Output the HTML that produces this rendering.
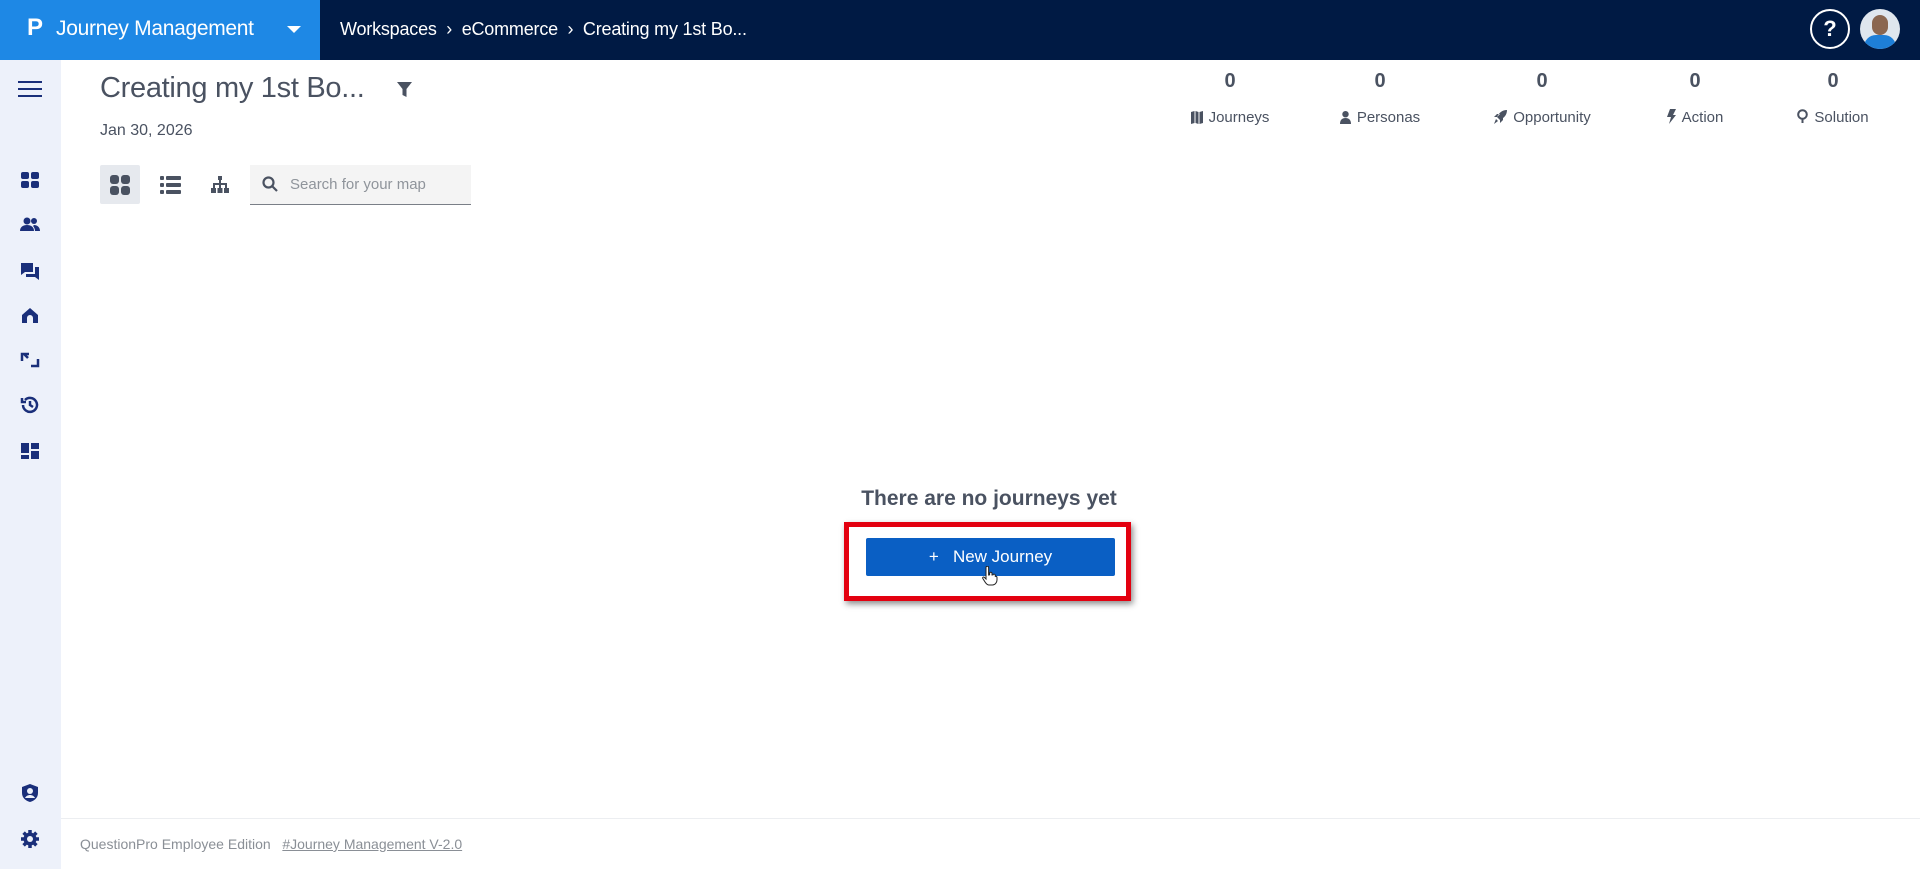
<!DOCTYPE html>
<html><head><meta charset="utf-8"><style>
*{margin:0;padding:0;box-sizing:border-box}
body{width:1920px;height:869px;overflow:hidden;background:#fff;font-family:"Liberation Sans",sans-serif;color:#4a5261;position:relative}
.hdr{position:absolute;left:0;top:0;width:1920px;height:60px;background:#001a44}
.brand{position:absolute;left:0;top:0;width:320px;height:60px;background:#1e88e5;color:#fff}
.abs{position:absolute}
.side{position:absolute;left:0;top:60px;width:61px;height:809px;background:#edf1fa}
.ic{position:absolute;left:20px;width:20px;height:20px}
.stat{position:absolute;text-align:center;width:150px}
.stat .n{font-size:20px;font-weight:bold;color:#4a5261;position:absolute;top:70px;width:150px}
.stat .l{font-size:15px;position:absolute;top:109px;width:150px;white-space:nowrap}
.stat svg{vertical-align:-2px;margin-right:6px}
</style></head><body>
<div class="hdr"></div>
<div class="brand">
 <div class="abs" style="left:27px;top:14px;font-size:24px;font-weight:bold">P</div>
 <div class="abs" style="left:56px;top:17px;font-size:21px;letter-spacing:-0.3px">Journey Management</div>
 <div class="abs" style="left:287px;top:26px;width:0;height:0;border-left:7px solid transparent;border-right:7px solid transparent;border-top:7px solid #fff"></div>
</div>
<div class="abs" style="left:340px;top:19px;color:#fff;font-size:18px;white-space:nowrap;letter-spacing:-0.2px">Workspaces &nbsp;›&nbsp; eCommerce &nbsp;›&nbsp; Creating my 1st Bo...</div>
<div class="abs" style="left:1810px;top:9px;width:40px;height:40px;border:2px solid #fff;border-radius:50%;color:#fff;font-size:22px;font-weight:bold;text-align:center;line-height:36px">?</div>
<div class="abs" style="left:1860px;top:9px;width:40px;height:40px;border-radius:50%;background:#dfe6ee;overflow:hidden">
 <div class="abs" style="left:12px;top:6px;width:16px;height:20px;border-radius:8px;background:#8a6650"></div>
 <div class="abs" style="left:4px;top:26px;width:32px;height:20px;border-radius:12px 12px 0 0;background:#1e7fd8"></div>
</div>

<div class="side">
 <svg class="abs" style="left:18px;top:20px" width="24" height="18"><rect y="1" width="24" height="2" fill="#1a2f7a"/><rect y="8" width="24" height="2" fill="#1a2f7a"/><rect y="15" width="24" height="2" fill="#1a2f7a"/></svg>
 <svg class="ic" style="top:110px" viewBox="0 0 20 20" fill="#1a2f7a"><rect x="1" y="2" width="8" height="7" rx="2"/><rect x="11" y="2" width="8" height="7" rx="2"/><rect x="1" y="11" width="8" height="7" rx="2"/><rect x="11" y="11" width="8" height="7" rx="2"/></svg>
 <svg class="ic" style="top:155px" viewBox="0 0 20 20" fill="#1a2f7a"><circle cx="7" cy="6" r="3.5"/><circle cx="14" cy="6" r="3"/><path d="M0 16c0-4 3-6 7-6s7 2 7 6z"/><path d="M14 10c3 0 6 2 6 6h-5c0-2-1-4-2-5z"/></svg>
 <svg class="ic" style="top:201px" viewBox="0 0 20 20" fill="#1a2f7a"><path d="M1 2h12v9H5l-4 3z"/><path d="M15 6h4v13l-4-3H6v-3h9z"/></svg>
 <svg class="ic" style="top:245px" viewBox="0 0 20 20" fill="#1a2f7a"><path d="M10 3l8 7v8h-5v-5a3 3 0 0 0-6 0v5H2v-8z"/></svg>
 <svg class="ic" style="top:290px" viewBox="0 0 20 20" fill="none" stroke="#1a2f7a" stroke-width="2.5"><path d="M2 11V4h7M18 9v7h-7M4 4l4 4"/></svg>
 <svg class="ic" style="top:335px" viewBox="0 0 20 20" fill="none" stroke="#1a2f7a" stroke-width="2.5"><path d="M3 10a7 7 0 1 0 2-5"/><path d="M10 6v4l3 2"/><path d="M2 3v4h4" /></svg>
 <svg class="ic" style="top:381px" viewBox="0 0 20 20" fill="#1a2f7a"><rect x="1" y="2" width="8" height="10"/><rect x="11" y="2" width="8" height="6"/><rect x="1" y="14" width="8" height="4"/><rect x="11" y="10" width="8" height="8"/></svg>
 <svg class="ic" style="top:723px" viewBox="0 0 20 20" fill="#1a2f7a"><path d="M10 1l8 3v6c0 5-4 8-8 9-4-1-8-4-8-9V4z"/><circle cx="10" cy="8" r="3" fill="#edf1fa"/><path d="M5 15c1-2 3-3 5-3s4 1 5 3" fill="#edf1fa"/></svg>
 <svg class="ic" style="top:769px" viewBox="0 0 20 20" fill="#1a2f7a"><circle cx="10" cy="10" r="6.5"/><g stroke="#1a2f7a" stroke-width="3.5"><path d="M10 1v18M1 10h18M3.6 3.6l12.8 12.8M16.4 3.6L3.6 16.4"/></g><circle cx="10" cy="10" r="3" fill="#edf1fa"/></svg>
</div>

<div class="abs" style="left:100px;top:72px;font-size:29px;color:#4a5261;letter-spacing:-0.3px">Creating my 1st Bo...</div>
<svg class="abs" style="left:397px;top:82px" width="15" height="15" viewBox="0 0 15 15"><path d="M0 0h15l-5.5 7v8l-4-2V7z" fill="#4a5261"/></svg>
<div class="abs" style="left:100px;top:122px;font-size:16px">Jan 30, 2026</div>

<div class="abs" style="left:100px;top:165px;width:40px;height:39px;background:#e6e9ee;border-radius:2px"></div>
<svg class="abs" style="left:109px;top:174px" width="22" height="22" viewBox="0 0 22 22" fill="#4a5261"><rect x="1" y="1" width="9" height="9" rx="3"/><rect x="12" y="1" width="9" height="9" rx="3"/><rect x="1" y="12" width="9" height="9" rx="3"/><rect x="12" y="12" width="9" height="9" rx="3"/></svg>
<svg class="abs" style="left:160px;top:176px" width="21" height="18" viewBox="0 0 21 18" fill="#4a5261"><rect x="0" y="0" width="4" height="4" rx="1"/><rect x="6" y="0" width="15" height="4" rx="1"/><rect x="0" y="7" width="4" height="4" rx="1"/><rect x="6" y="7" width="15" height="4" rx="1"/><rect x="0" y="14" width="4" height="4" rx="1"/><rect x="6" y="14" width="15" height="4" rx="1"/></svg>
<svg class="abs" style="left:211px;top:176px" width="18" height="17" viewBox="0 0 18 17" fill="#4a5261"><rect x="7" y="0" width="4" height="4"/><rect x="8" y="4" width="2" height="4"/><rect x="2" y="7" width="14" height="2"/><rect x="2" y="7" width="2" height="5"/><rect x="14" y="7" width="2" height="5"/><rect x="8" y="7" width="2" height="5"/><rect x="0" y="12" width="5" height="5"/><rect x="6.5" y="12" width="5" height="5"/><rect x="13" y="12" width="5" height="5"/></svg>
<div class="abs" style="left:250px;top:165px;width:221px;height:40px;background:#f4f4f4;border-bottom:1px solid #7a7f87"></div>
<svg class="abs" style="left:262px;top:176px" width="16" height="16" viewBox="0 0 16 16" fill="none" stroke="#4a5261" stroke-width="2.2"><circle cx="6.5" cy="6.5" r="5"/><path d="M10 10l5 5"/></svg>
<div class="abs" style="left:290px;top:176px;font-size:15px;color:#8f949b">Search for your map</div>

<div class="stat" style="left:1155px"><div class="n">0</div><div class="l"><svg width="12" height="13" viewBox="0 0 12 13" fill="#4a5261"><path d="M0 1l3.5-1v12L0 13zM4.5 0l3 1v12l-3-1zM8.5 1L12 0v12l-3.5 1z"/></svg>Journeys</div></div>
<div class="stat" style="left:1305px"><div class="n">0</div><div class="l"><svg width="11" height="13" viewBox="0 0 11 13" fill="#4a5261"><circle cx="5.5" cy="3.2" r="3.2"/><path d="M0 13c0-4 2-6 5.5-6S11 9 11 13z"/></svg>Personas</div></div>
<div class="stat" style="left:1467px"><div class="n">0</div><div class="l"><svg width="14" height="14" viewBox="0 0 14 14" fill="#4a5261"><path d="M14 0C9 0 6 3 4 7l3 3c4-2 7-5 7-10zM4 7L1 7l3-3h3zM7 10v3l3-3V7zM3 9l2 2-4 3z"/></svg>Opportunity</div></div>
<div class="stat" style="left:1620px"><div class="n">0</div><div class="l"><svg width="9" height="15" viewBox="0 0 9 15" fill="#4a5261"><path d="M3 0h6L6 6h3L2 15l2-7H0z"/></svg>Action</div></div>
<div class="stat" style="left:1758px"><div class="n">0</div><div class="l"><svg width="11" height="15" viewBox="0 0 11 15" fill="none" stroke="#4a5261" stroke-width="2"><circle cx="5.5" cy="5.5" r="4.3"/><path d="M5.5 10v4"/></svg>Solution</div></div>

<div class="abs" style="left:789px;top:487px;width:400px;text-align:center;font-size:21px;font-weight:bold;color:#4a5261">There are no journeys yet</div>
<div class="abs" style="left:844px;top:522px;width:287px;height:79px;border:5px solid #e3000f;box-shadow:2px 3px 6px rgba(0,0,0,.45)"></div>
<div class="abs" style="left:866px;top:538px;width:249px;height:38px;background:#0a5fc4;border-radius:2px;color:#fff;font-size:17px;text-align:center;line-height:38px">+&nbsp;&nbsp; New Journey</div>
<svg class="abs" style="left:982px;top:566px" width="16" height="20" viewBox="0 0 16 20"><path d="M4 1.5a1.3 1.3 0 0 1 2.6 0V9l1-.2V7.5a1.2 1.2 0 0 1 2.4 0v1.5l1-.1a1.2 1.2 0 0 1 2.3.4v1l.5-.1c1 0 1.2.8 1.2 1.5V14c0 2.5-2 5-4.5 5H7c-1.5 0-2.5-1-3.5-2.3L.8 12.5C.3 11.6 1.2 10.5 2.3 11.3L4 13z" fill="#fff" stroke="#222" stroke-width="1"/></svg>

<div class="abs" style="left:61px;top:818px;width:1859px;height:1px;background:#eceef1"></div>
<div class="abs" style="left:80px;top:836px;font-size:14px;color:#8a8f96">QuestionPro Employee Edition &nbsp;&nbsp;<u>#Journey Management V-2.0</u></div>
</body></html>
